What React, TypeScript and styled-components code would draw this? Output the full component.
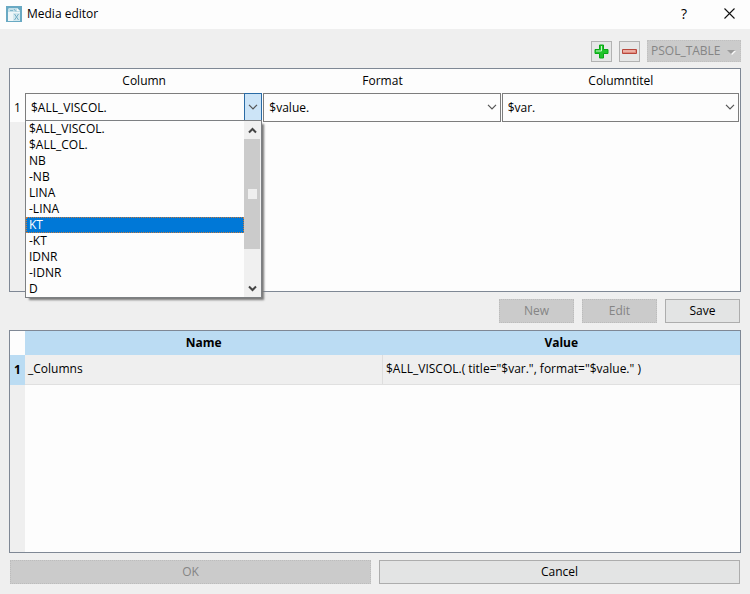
import React, { useState } from "react";
import styled, { createGlobalStyle, css } from "styled-components";

const GlobalStyle = createGlobalStyle`
  *, *::before, *::after { box-sizing: border-box; }
  body { margin: 0; background: #efefef; }
  body, button, select, table { font: 12px/16px "Open Sans", "Noto Sans", sans-serif; color: #000; }
`;

const Dialog = styled.div`
  min-height: 100vh;
  display: flex;
  flex-direction: column;
`;

const TitleBar = styled.header`
  height: 29px;
  padding: 0 1px 2px 6px;
  display: flex;
  align-items: center;
  gap: 5px;
  background: #fdfdfd;
`;

const Title = styled.h1`
  flex: 1;
  margin: 0;
  font-size: 12px;
  line-height: 16px;
  font-weight: 400;
`;

const WindowButton = styled.button`
  width: 40px;
  height: 27px;
  padding: 0;
  border: 0;
  background: transparent;
  display: grid;
  place-items: center;
  font-size: 14px;
`;

const Content = styled.main`
  flex: 1;
  display: flex;
  flex-direction: column;
  padding: 11px 9px 10px;
`;

const Toolbar = styled.div`
  display: flex;
  justify-content: flex-end;
  align-items: center;
  gap: 7px;
  height: 22px;
  margin-bottom: 6px;
`;

const ToolButton = styled.button`
  width: 21px;
  height: 21px;
  padding: 0;
  border: 1px solid #b2b2b2;
  background: #e6e7e7;
  display: grid;
  place-items: center;
`;

const MenuButton = styled.button`
  width: 94px;
  height: 22px;
  padding: 0 4px 0 3px;
  border: 1px dotted #c0c0c0;
  background: #cbcbcb;
  color: #858585;
  display: flex;
  align-items: center;
  justify-content: space-between;
`;

const Pane = styled.section`
  flex: 1 1 222px;
  border: 1px solid #7f8895;
  background: linear-gradient(to right, #efefef 15px, #fdfdfd 15px);
`;

const Grid = styled.table`
  width: 100%;
  table-layout: fixed;
  border-collapse: collapse;
`;

const GutterCol = styled.col`
  width: 15px;
`;

const Head = styled.th<{ $selected?: boolean }>`
  height: 24px;
  padding: 0;
  text-align: center;
  background: #fdfdfd;
  font-weight: 400;
  & + & { border-left: 1px solid #e8e8e8; }
  ${(p) =>
    p.$selected &&
    css`
      background: #bbdcf3;
      font-weight: 700;
      & + & { border-left: 0; }
    `}
`;

const Corner = styled.td`
  background: #fdfdfd;
`;

const RowHead = styled(Head)`
  height: 29px;
`;

const ComboCell = styled.td`
  height: 29px;
  padding: 0 1px 0 0;
`;

const Combo = styled.div`
  position: relative;
  height: 29px;
`;

const ComboSelect = styled.select`
  appearance: none;
  width: 100%;
  height: 29px;
  padding: 0 20px 0 5px;
  border: 1px solid #7d7d7d;
  border-radius: 0;
  background: #fdfdfd;
  outline: 0;
`;

const ComboArrow = styled.span<{ $open?: boolean }>`
  position: absolute;
  top: 0;
  right: 0;
  width: 18px;
  height: 28px;
  display: grid;
  place-items: center;
  pointer-events: none;
  ${(p) =>
    p.$open &&
    css`
      background: #cce4f7;
      border: 1px solid #2a6ba5;
    `}
`;

const Popup = styled.div`
  position: absolute;
  z-index: 2;
  top: 27px;
  left: 0;
  right: 0;
  display: flex;
  border: 1px solid #7d8083;
  background: #fdfdfd;
  box-shadow: 3px 3px 2px -1px #777;
`;

const Options = styled.ul`
  flex: 1;
  margin: 0;
  padding: 0;
  list-style: none;
`;

const Option = styled.li<{ $active: boolean }>`
  height: 16px;
  padding-left: 3px;
  line-height: 16px;
  ${(p) =>
    p.$active &&
    css`
      background: #0078d7;
      color: #fff;
      outline: 1px dotted #c77a3c;
      outline-offset: -1px;
    `}
`;

const ScrollTrack = styled.div`
  width: 17px;
  padding-right: 1px;
  display: grid;
  grid-template-rows: 18px 110px 1fr 17px;
  background: #f0f0f0;
`;

const ScrollThumb = styled.div`
  grid-row: 2;
  display: grid;
  place-items: center;
  background: #cbcbcb;
`;

const ScrollGrip = styled.span`
  width: 9px;
  height: 10px;
  background: #efefef;
`;

const ScrollEnd = styled.div<{ $last?: boolean }>`
  grid-row: ${(p) => (p.$last ? 4 : 1)};
  display: grid;
  place-items: center;
`;

const ValueCell = styled.td`
  height: 30px;
  padding: 0 3px;
  background: #efefef;
  border-bottom: 1px solid #e0e0e0;
  & + & { border-left: 1px solid #dedede; }
`;

const ValueRowHead = styled(Head)`
  height: 30px;
`;

const Actions = styled.div`
  display: flex;
  justify-content: flex-end;
  gap: 8px;
  padding: 7px 1px 7px;
`;

const Footer = styled.footer`
  display: flex;
  gap: 8px;
  padding: 7px 1px 0;
`;

const PushButton = styled.button<{ $wide?: boolean }>`
  ${(p) => (p.$wide ? "flex: 1;" : "width: 75px;")}
  height: 24px;
  padding: 0;
  border: 1px solid #adadad;
  background: #e3e4e4;
  &:disabled {
    color: #858585;
    background: #cbcbcb;
    border: 1px dotted #bcbcbc;
  }
`;

const columnOptions = [
  "$ALL_VISCOL.", "$ALL_COL.", "NB", "-NB", "LINA", "-LINA", "KT", "-KT", "IDNR", "-IDNR", "D",
];

const Chevron = () => (
  <svg width="10" height="6" viewBox="0 0 10 6" fill="none" stroke="#555" strokeWidth="1.2">
    <path d="M1 .8 5 4.8 9 .8" />
  </svg>
);

const ScrollChevron = ({ up }: { up?: boolean }) => (
  <svg width="9" height="7" viewBox="0 0 9 7" fill="none" stroke="#444" strokeWidth="2">
    <path d={up ? "M1 5.5 4.5 2 8 5.5" : "M1 1.5 4.5 5 8 1.5"} />
  </svg>
);

const AppIcon = () => (
  <svg width="16" height="16" viewBox="0 0 16 16" aria-hidden="true">
    <path fill="#69a9c3" d="M0 0h16v16H0z" />
    <path fill="#eef6f8" d="M2 6h12v9H2z" />
    <path fill="#c3dfe8" d="M3 2h8l3 3v1H2V3z" />
    <path fill="none" stroke="#7fb6cb" d="M4 4.500h3M8 3l2 2.500" />
    <path fill="#f6fafb" d="M11 2l3 3h-3z" />
    <path fill="#d3e8ee" d="M7 7h7v8H7z" />
    <path fill="none" stroke="#72aec5" d="m8.500 8 4 6m0-6-4 6" />
  </svg>
);

const PlusIcon = () => (
  <svg width="15" height="15" viewBox="0 0 15 15" aria-hidden="true">
    <path d="M5.500 1h4v4.500H14v4H9.500V14h-4V9.500H1v-4h4.500z" fill="#20c52c" stroke="#08a714" />
    <path d="M7.500 2v5H2" fill="none" stroke="#c9f3ca" />
  </svg>
);

const MinusIcon = () => (
  <svg width="15" height="5" viewBox="0 0 15 5" aria-hidden="true">
    <path d="M.5.5h14v4H.5z" fill="#e08a7d" stroke="#b8473c" />
    <path d="M1 2h12" stroke="#f6d3cc" />
  </svg>
);

interface ComboBoxProps {
  label: string;
  options: string[];
  open?: boolean;
}

function ComboBox({ label, options, open }: ComboBoxProps) {
  const [value, setValue] = useState(options[0]);
  const [active, setActive] = useState("KT");
  return (
    <Combo>
      <ComboSelect aria-label={label} value={value} onChange={(e) => setValue(e.target.value)}>
        {options.map((o) => (
          <option key={o}>{o}</option>
        ))}
      </ComboSelect>
      <ComboArrow $open={open}>
        <Chevron />
      </ComboArrow>
      {open && (
        <Popup>
          <Options role="listbox" aria-label={label}>
            {options.map((o) => (
              <Option
                key={o}
                role="option"
                aria-selected={o === active}
                $active={o === active}
                onMouseEnter={() => setActive(o)}
                onClick={() => setValue(o)}
              >
                {o}
              </Option>
            ))}
          </Options>
          <ScrollTrack>
            <ScrollEnd><ScrollChevron up /></ScrollEnd>
            <ScrollThumb><ScrollGrip /></ScrollThumb>
            <ScrollEnd $last><ScrollChevron /></ScrollEnd>
          </ScrollTrack>
        </Popup>
      )}
    </Combo>
  );
}

export default function App() {
  return (
    <>
      <GlobalStyle />
      <Dialog>
        <TitleBar>
          <AppIcon />
          <Title>Media editor</Title>
          <WindowButton aria-label="Help">?</WindowButton>
          <WindowButton aria-label="Close">
            <svg width="11" height="11" viewBox="0 0 11 11" stroke="#111" strokeWidth="1.1">
              <path d="m.5.5 10 10m0-10-10 10" />
            </svg>
          </WindowButton>
        </TitleBar>
        <Content>
          <Toolbar>
            <ToolButton aria-label="Add column"><PlusIcon /></ToolButton>
            <ToolButton aria-label="Remove column"><MinusIcon /></ToolButton>
            <MenuButton disabled>
              PSOL_TABLE
              <svg width="9" height="8" viewBox="0 0 9 8" aria-hidden="true">
                <path d="M2 4h7L5 8z" fill="#fafafa" />
                <path d="M0 3h8L4 7z" fill="#9b9b9b" />
              </svg>
            </MenuButton>
          </Toolbar>
          <Pane>
            <Grid>
              <colgroup><GutterCol /><col /><col /><col /></colgroup>
              <thead>
                <tr>
                  <Corner />
                  <Head scope="col">Column</Head>
                  <Head scope="col">Format</Head>
                  <Head scope="col">Columntitel</Head>
                </tr>
              </thead>
              <tbody>
                <tr>
                  <RowHead scope="row">1</RowHead>
                  <ComboCell><ComboBox label="Column" options={columnOptions} open /></ComboCell>
                  <ComboCell><ComboBox label="Format" options={["$value."]} /></ComboCell>
                  <ComboCell><ComboBox label="Columntitel" options={["$var."]} /></ComboCell>
                </tr>
              </tbody>
            </Grid>
          </Pane>
          <Actions>
            <PushButton disabled>New</PushButton>
            <PushButton disabled>Edit</PushButton>
            <PushButton>Save</PushButton>
          </Actions>
          <Pane>
            <Grid>
              <colgroup><GutterCol /><col /><col /></colgroup>
              <thead>
                <tr>
                  <Corner />
                  <Head scope="col" $selected>Name</Head>
                  <Head scope="col" $selected>Value</Head>
                </tr>
              </thead>
              <tbody>
                <tr>
                  <ValueRowHead scope="row" $selected>1</ValueRowHead>
                  <ValueCell>_Columns</ValueCell>
                  <ValueCell>$ALL_VISCOL.( title="$var.", format="$value." )</ValueCell>
                </tr>
              </tbody>
            </Grid>
          </Pane>
          <Footer>
            <PushButton $wide disabled>OK</PushButton>
            <PushButton $wide>Cancel</PushButton>
          </Footer>
        </Content>
      </Dialog>
    </>
  );
}
